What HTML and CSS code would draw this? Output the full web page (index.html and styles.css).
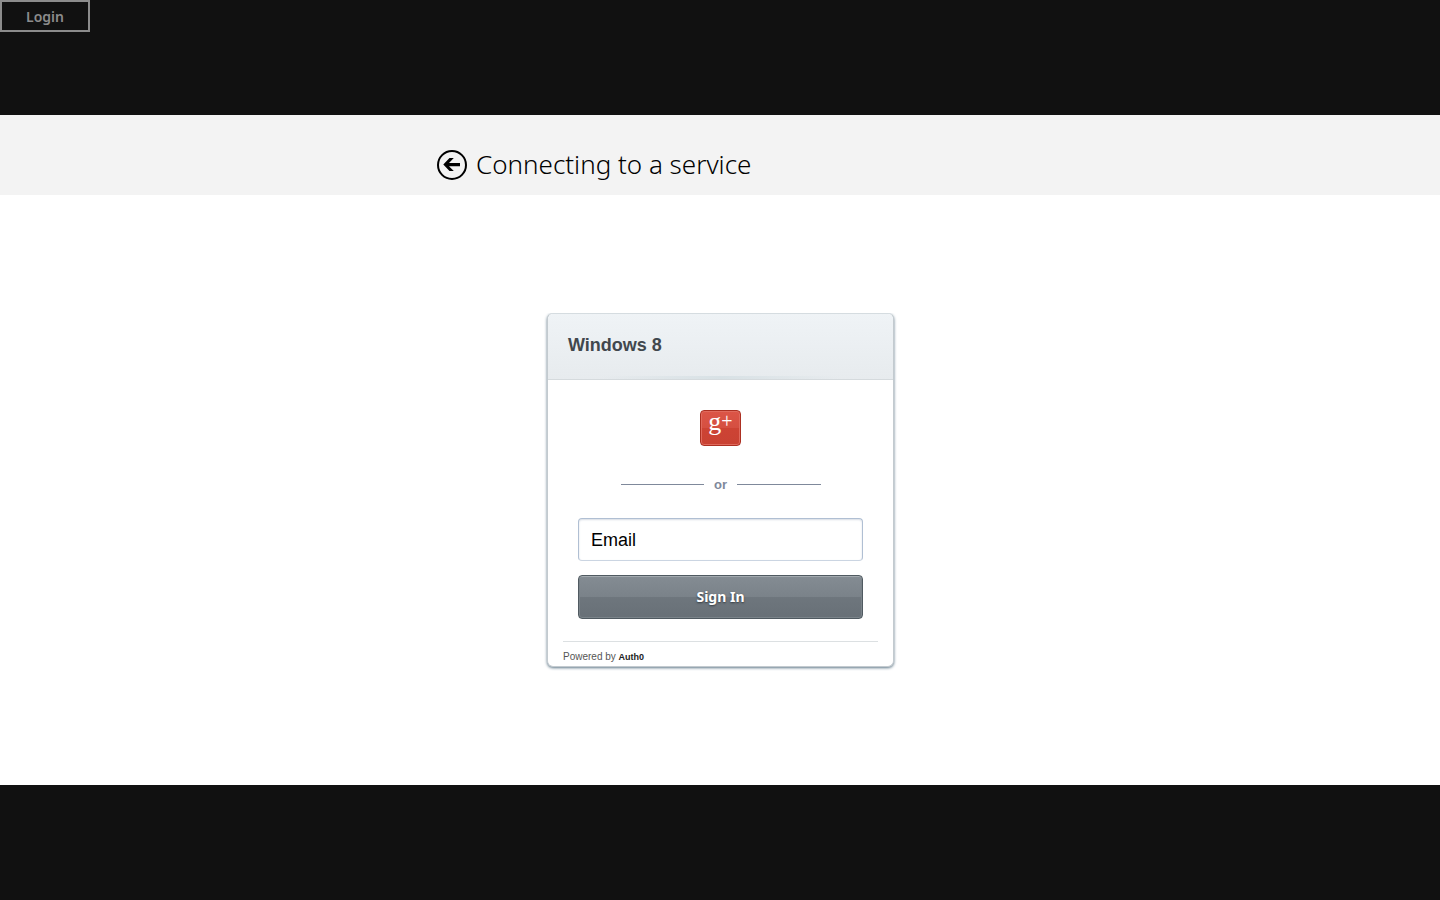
FILE: index.html
```html
<!DOCTYPE html>
<html lang="en">
<head>
<meta charset="utf-8">
<meta name="viewport" content="width=device-width, initial-scale=1">
<title>Connecting to a service</title>
<link rel="stylesheet" href="styles.css">
</head>
<body>
<div class="page">
  <div class="backdrop">
    <button class="login" type="button">Login</button>
  </div>
  <main class="broker">
    <header class="broker-header">
      <div class="broker-heading">
        <button class="back" type="button" aria-label="Back">
          <svg width="30" height="30" viewBox="0 0 30 30" aria-hidden="true">
            <circle cx="15" cy="15" r="14" fill="none" stroke="#000" stroke-width="2"/>
            <path d="M6.300 14.500L12.500 8H16.800L12 12.900H23V16.200H12L16.800 21H12.500Z"/>
          </svg>
        </button>
        <h1 class="broker-title">Connecting to a service</h1>
      </div>
    </header>
    <div class="broker-body">
      <form class="card">
        <div class="card-header"><h2 class="card-title">Windows 8</h2></div>
        <div class="card-body">
          <button class="google" type="button" aria-label="Sign in with Google+"><span class="google-g">g</span><span class="google-plus">+</span></button>
          <div class="divider"><span class="divider-text">or</span></div>
          <input class="email" type="email" placeholder="Email" aria-label="Email">
          <button class="signin" type="submit">Sign In</button>
        </div>
        <footer class="card-footer">Powered by <a class="brand" href="#">Auth0</a></footer>
      </form>
    </div>
  </main>
  <div class="backdrop"></div>
</div>
</body>
</html>
```
FILE: styles.css
```css
* { box-sizing: border-box; }
body {
  margin: 0;
  background: #111;
  font-family: "Liberation Sans", Arial, sans-serif;
}
button, input { font: inherit; }
button { cursor: pointer; }
.page {
  min-height: 100vh;
  display: flex;
  flex-direction: column;
}
.backdrop { flex: 1 0 0; }
.login {
  display: block;
  width: 90px;
  height: 32px;
  padding: 0;
  border: 2px solid #8c8c8c;
  background: #111;
  color: #8c8c8c;
  font: 600 14px "Noto Sans", sans-serif;
}
.broker {
  flex: 0 0 auto;
  min-height: 670px;
  display: flex;
  flex-direction: column;
  background: #fff;
}
.broker-header {
  padding: 30px 20px 10px;
  background: #f3f3f3;
}
.broker-heading {
  max-width: 566px;
  height: 40px;
  margin: 0 auto;
  display: flex;
  align-items: center;
  gap: 9px;
}
.back {
  display: flex;
  padding: 0;
  border: 0;
  background: none;
}
.broker-title {
  margin: 0;
  padding-bottom: 2px;
  color: #000;
  font: 300 26px/38px "Noto Sans", sans-serif;
}
.broker-body {
  flex: 1;
  display: flex;
  justify-content: center;
  align-items: center;
  padding-left: 1px;
}
.card {
  width: 347px;
  border: 1px solid #c3cacf;
  border-top-color: #d5dce0;
  border-radius: 6px;
  background: #fff;
  box-shadow: 0 1px 3px #5f7888;
  clip-path: inset(0 -6px -6px -6px);
}
.card-header {
  height: 66px;
  padding: 20px;
  border-bottom: 1px solid #d5dadd;
  border-radius: 5px 5px 0 0;
  background:
    linear-gradient(90deg, transparent 15%, #d8e1e5 50%, transparent 85%) bottom / 100% 3px no-repeat,
    linear-gradient(#eff3f6, #e7ebee);
}
.card-title {
  margin: 0;
  color: #41474d;
  font-size: 18px;
  line-height: 22px;
}
.card-body {
  padding: 30px;
  padding-bottom: 22px;
  display: flex;
  flex-direction: column;
}
.google {
  align-self: center;
  width: 41px;
  height: 36px;
  padding: 0 0 10px;
  display: flex;
  justify-content: center;
  align-items: center;
  border: 1px solid #ac3022;
  border-radius: 4px;
  background: linear-gradient(#dc5547, #d54f41 50%, #cd4334 50%, #c94233);
  box-shadow: inset 0 0 0 1px #e0695c;
  color: #fff;
  font-family: "Liberation Serif", serif;
  line-height: 24px;
}
.google-g { font-size: 26px; padding-bottom: 2px; }
.google-plus { font-size: 20px; padding-bottom: 4px; }
.divider {
  width: 200px;
  margin: 29px auto 24px;
  display: flex;
  align-items: center;
  gap: 10px;
  color: #7f899b;
  font-size: 13px;
  font-weight: bold;
  line-height: 19px;
}
.divider::before, .divider::after {
  content: "";
  flex: 1;
  height: 1px;
  background: #7f899b;
}
.email {
  width: 100%;
  height: 43px;
  padding: 1px 12px 0;
  border: 1px solid #b0bfd3;
  border-bottom-color: #cbd5e2;
  border-radius: 4px;
  background: #fff;
  box-shadow: inset 0 1px 2px #d7dce4;
  font-size: 18px;
}
.email::placeholder { color: #000; opacity: 1; }
.signin {
  height: 44px;
  margin-top: 14px;
  padding: 0 0 2px;
  border: 1px solid #505a61;
  border-radius: 4px;
  background: linear-gradient(#848c93, #7a8289 50%, #6e767d 50%, #687077);
  box-shadow: inset 0 1px 0 #a3aaaf, inset 0 0 0 1px #7b848a;
  color: #fff;
  font: bold 14px "Noto Sans", sans-serif;
  text-shadow: 0 1px 2px #333a40;
}
.card-footer {
  margin: 0 15px;
  padding: 8px 0 2px;
  border-top: 1px solid #dce0e2;
  color: #555;
  font-size: 10px;
  line-height: 14px;
}
.brand {
  color: #222;
  font-size: 9px;
  font-weight: bold;
  text-decoration: none;
}
```
